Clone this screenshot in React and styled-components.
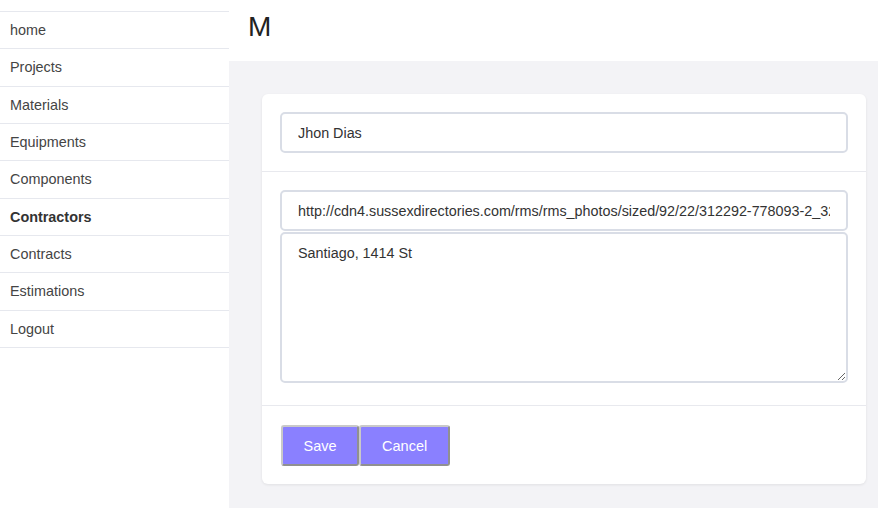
import React from "react";
import styled, { createGlobalStyle } from "styled-components";

const GlobalStyle = createGlobalStyle`
  html, body {
    margin: 0;
    padding: 0;
    background: #fff;
    font-family: "Liberation Sans", Arial, sans-serif;
  }
  * {
    box-sizing: border-box;
  }
`;

const Layout = styled.div`
  display: flex;
  width: 878px;
  height: 508px;
  overflow: hidden;
`;

const Sidebar = styled.nav`
  width: 229px;
  flex-shrink: 0;
  padding-top: 11px;
  background: #fff;
`;

const NavList = styled.ul`
  list-style: none;
  margin: 0;
  padding: 0;
  border-top: 1px solid #e6e8ee;
`;

const NavItem = styled.li`
  padding: 8px 10px;
  line-height: 20.33px;
  font-size: 14.4px;
  color: ${(p) => (p.active ? "#333" : "#444")};
  font-weight: ${(p) => (p.active ? 700 : 400)};
  border-bottom: 1px solid #e6e8ee;
  cursor: pointer;
`;

const Main = styled.div`
  flex: 1;
  display: flex;
  flex-direction: column;
`;

const TopBar = styled.header`
  height: 61px;
  padding: 11px 19px 0;
  background: #fff;
`;

const Title = styled.h1`
  margin: 0;
  font-size: 28px;
  font-weight: 400;
  line-height: 32px;
  color: #222;
`;

const Content = styled.div`
  flex: 1;
  background: #f3f3f6;
  padding: 33px 12px 0 33px;
`;

const Card = styled.form`
  background: #fff;
  border-radius: 6px;
  box-shadow: 0 1px 3px rgba(0, 0, 0, 0.08);
`;

const Section = styled.div`
  display: flex;
  flex-direction: column;
  gap: 1px;
  padding: ${(p) => p.pad || "18px"};
  border-bottom: ${(p) => (p.last ? "none" : "1px solid #e8e9ee")};
`;

const Input = styled.input`
  width: 100%;
  height: 41px;
  padding: 0 16px;
  border: 2px solid #d9dde6;
  border-radius: 5px;
  font-family: inherit;
  font-size: 14.35px;
  color: #333;
  outline: none;
`;

const TextArea = styled.textarea`
  width: 100%;
  height: 151px;
  padding: 10px 16px;
  border: 2px solid #d9dde6;
  border-radius: 5px;
  font-family: inherit;
  font-size: 14.35px;
  line-height: 18px;
  color: #333;
  outline: none;
  resize: vertical;
`;

const Buttons = styled.div`
  display: flex;
`;

const Button = styled.button`
  height: 41px;
  padding: 0 ${(p) => p.px || 21}px;
  background: #8a80ff;
  color: #fff;
  font-family: inherit;
  font-size: 14.5px;
  border: 2px solid;
  border-color: #c9c9c9 #909090 #909090 #c9c9c9;
  border-radius: 3px;
  cursor: pointer;
`;

const links = [
  "home",
  "Projects",
  "Materials",
  "Equipments",
  "Components",
  "Contractors",
  "Contracts",
  "Estimations",
  "Logout",
];

const App = () => {
  return (
    <>
      <GlobalStyle />
      <Layout>
        <Sidebar>
          <NavList>
            {links.map((l) => (
              <NavItem key={l} active={l === "Contractors"}>
                {l}
              </NavItem>
            ))}
          </NavList>
        </Sidebar>
        <Main>
          <TopBar>
            <Title>M</Title>
          </TopBar>
          <Content>
            <Card onSubmit={(e) => e.preventDefault()}>
              <Section>
                <Input defaultValue="Jhon Dias" />
              </Section>
              <Section pad="18px 18px 22px">
                <Input defaultValue="http://cdn4.sussexdirectories.com/rms/rms_photos/sized/92/22/312292-778093-2_320x320.jpg" />
                <TextArea defaultValue="Santiago, 1414 St" />
              </Section>
              <Section last pad="19px 18px 18px 19px">
                <Buttons>
                  <Button type="submit" px={20.5}>
                    Save
                  </Button>
                  <Button type="button">Cancel</Button>
                </Buttons>
              </Section>
            </Card>
          </Content>
        </Main>
      </Layout>
    </>
  );
};

export default App;
